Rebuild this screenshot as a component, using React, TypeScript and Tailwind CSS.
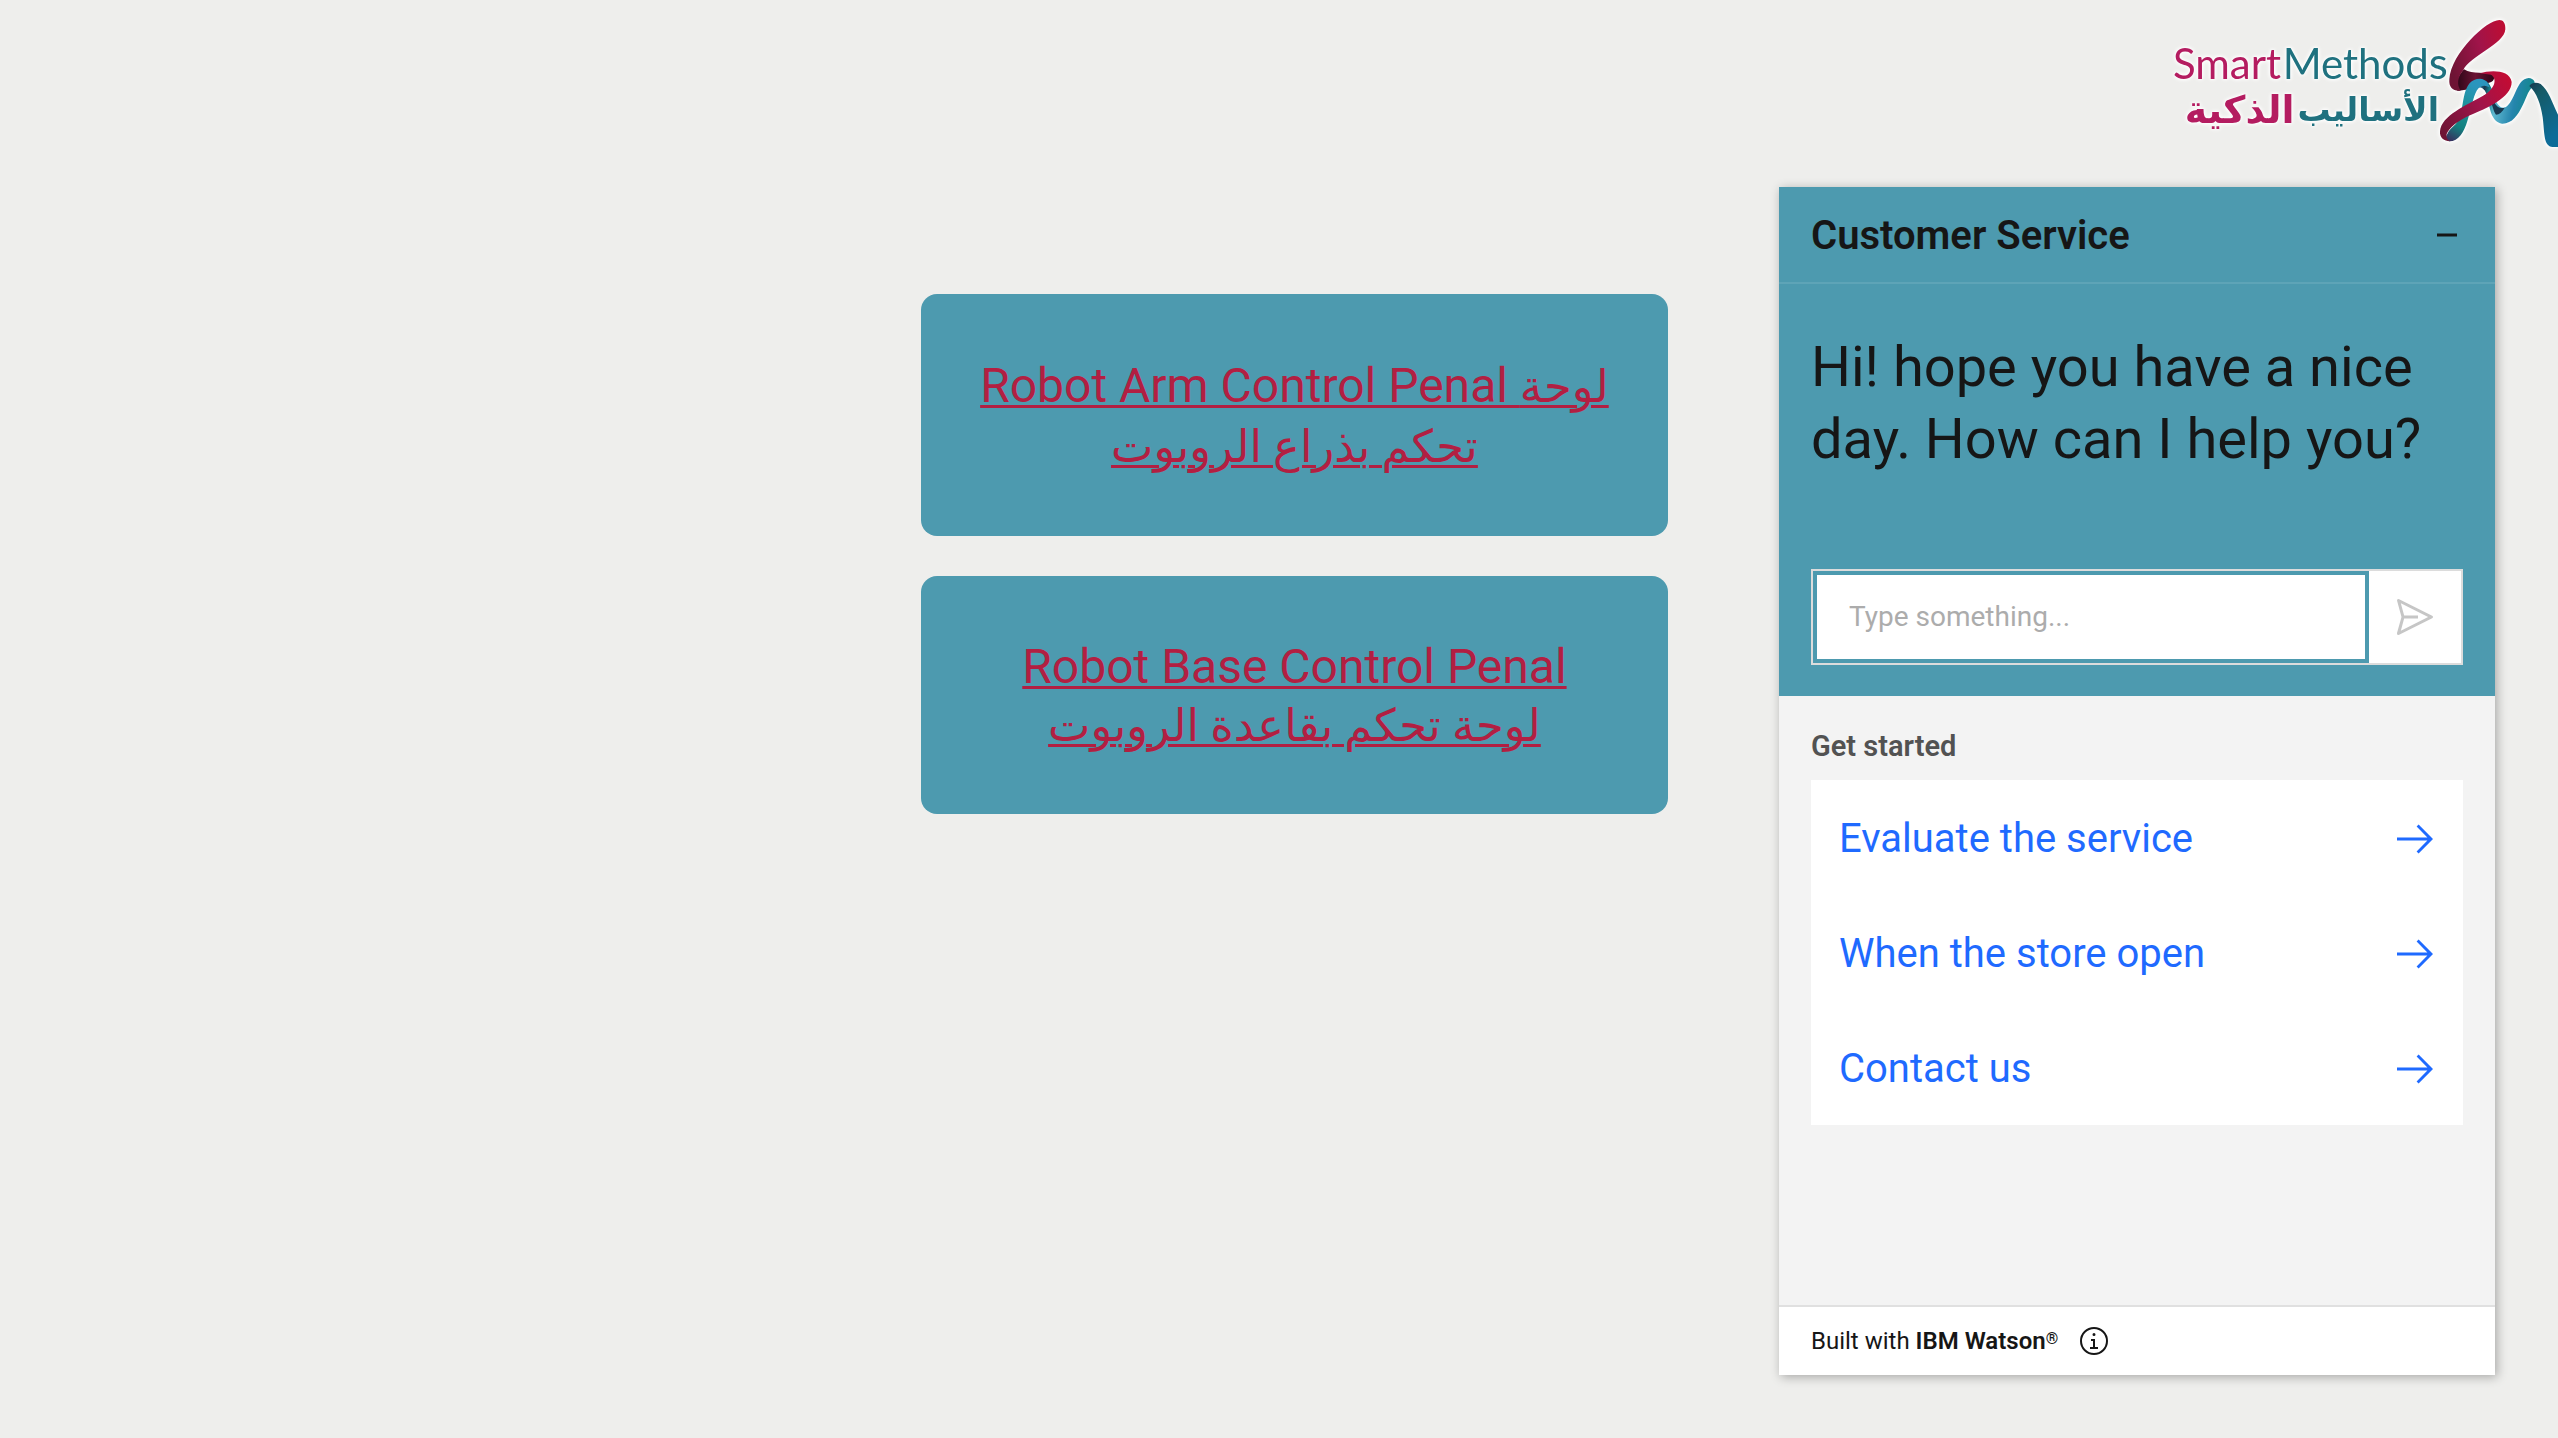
import type { ReactNode } from "react";

const starters = ["Evaluate the service", "When the store open", "Contact us"];

function Logo() {
  return (
    <svg
      viewBox="0 0 1224 510"
      className="h-[170px] w-[408px] [filter:drop-shadow(0_0_2px_white)_drop-shadow(0_0_1px_white)]"
      role="img"
      aria-label="Smart Methods"
    >
      <defs>
        <linearGradient id="armTop" x1="0" y1="0.6" x2="1" y2="0.2">
          <stop offset="0" stopColor="#6e1434" />
          <stop offset="0.55" stopColor="#a0144a" />
          <stop offset="1" stopColor="#bd0d33" />
        </linearGradient>
        <linearGradient id="armLow" x1="0" y1="0.8" x2="1" y2="0.2">
          <stop offset="0" stopColor="#6e1434" />
          <stop offset="0.55" stopColor="#a0144a" />
          <stop offset="1" stopColor="#c20c34" />
        </linearGradient>
        <linearGradient id="fold" x1="0" y1="0" x2="1" y2="0">
          <stop offset="0" stopColor="#2c0617" />
          <stop offset="0.5" stopColor="#6a1233" />
          <stop offset="1" stopColor="#2c0617" />
        </linearGradient>
        <linearGradient id="rise" x1="0" y1="1" x2="0.4" y2="0">
          <stop offset="0" stopColor="#3d2358" />
          <stop offset="0.3" stopColor="#14807f" />
          <stop offset="0.6" stopColor="#1b9296" />
          <stop offset="1" stopColor="#2b95bd" />
        </linearGradient>
        <linearGradient id="dip" x1="0" y1="0" x2="1" y2="0.15">
          <stop offset="0" stopColor="#2b95bd" />
          <stop offset="0.14" stopColor="#17384f" />
          <stop offset="0.22" stopColor="#157a85" />
          <stop offset="0.38" stopColor="#5fb9d0" />
          <stop offset="0.7" stopColor="#2585ad" />
          <stop offset="1" stopColor="#11888a" />
        </linearGradient>
        <linearGradient id="fall" x1="0" y1="0" x2="0.4" y2="1">
          <stop offset="0" stopColor="#17384f" />
          <stop offset="0.25" stopColor="#155a66" />
          <stop offset="1" stopColor="#0d6c98" />
        </linearGradient>
      </defs>
      <g fontFamily="Lato, sans-serif" fontSize="126">
        <text x="69" y="236" fill="#b41c60">Smart</text>
        <text x="398" y="236" fill="#1f717f">
          Method<tspan fontSize="132">s</tspan>
        </text>
      </g>
      <g fontFamily="DejaVu Sans, sans-serif" fontWeight="700" direction="rtl">
        <text x="867" y="362" fontSize="99" fill="#1f717f">الأساليب</text>
        <text x="434" y="370" fontSize="114" fill="#b41c60">الذكية</text>
      </g>
      <path fill="url(#fold)" d="M942 208C968 226 1008 212 1032 226C1036 246 1020 250 1000 250C972 254 955 274 922 272C914 250 925 225 942 208Z" />
      <path fill="url(#dip)" d="M985 237C1014 236 1024 258 1032 286C1038 310 1050 328 1066 322C1096 306 1098 236 1136 234C1152 236 1158 246 1152 260C1138 262 1130 290 1118 316C1104 346 1086 372 1056 371C1026 366 1020 330 1014 300C1010 276 1002 262 985 262Z" />
      <path fill="#17384f" d="M1028 296C1036 316 1046 328 1064 323C1058 334 1048 344 1038 344C1030 334 1028 316 1020 300Z" />
      <path fill="url(#rise)" d="M892 402C900 382 920 378 930 352C942 316 936 236 990 236C1006 238 1016 246 1018 262C1004 254 990 256 980 272C958 310 956 424 898 424C886 420 886 410 892 402Z" />
      <path fill="url(#armLow)" d="M990 220C1020 210 1080 208 1085 246C1086 292 1008 326 960 346C925 362 898 382 890 402C888 414 894 422 902 424C884 425 868 414 870 394C874 346 950 316 998 288C1036 266 1042 238 1024 224Z" />
      <path fill="url(#armTop)" d="M1048 60C1010 60 903 160 898 238C896 262 908 274 932 272C920 254 922 232 940 210C958 170 1064 132 1066 88C1067 70 1060 60 1048 60Z" />
      <path fill="url(#fall)" d="M1138 258C1146 246 1160 246 1172 252C1196 272 1206 306 1224 344V441H1208C1180 440 1184 398 1178 352C1172 312 1160 278 1138 258Z" />
    </svg>
  );
}

function ControlCard({ leading, children }: { leading: string; children: ReactNode }) {
  return (
    <div className="rounded-2xl bg-[#4d9aaf] px-6 pt-[62px] pb-[60px] text-center">
      <a
        href="#"
        className={`${leading} text-5xl text-[#b21f42] underline decoration-[3px] underline-offset-3 [font-family:Roboto,'DejaVu_Sans',sans-serif]`}
      >
        {children}
      </a>
    </div>
  );
}

function Arabic({ children }: { children: string }) {
  return (
    <span lang="ar" className="text-[45px] leading-none">
      {children}
    </span>
  );
}

export default function App() {
  return (
    <div className="flex min-h-screen flex-col bg-[#eeeeec] [font-family:Roboto,sans-serif]">
      <header className="flex h-[187px] shrink-0 justify-end">
        <Logo />
      </header>

      <main className="flex flex-1 gap-[111px] pr-[63px] pb-[63px] pl-[36%]">
        <nav className="flex flex-1 flex-col gap-10 pt-[107px]" aria-label="Control panels">
          <ControlCard leading="leading-[60px]">
            Robot Arm Control Penal <Arabic>لوحة</Arabic>
            <br />
            <Arabic>تحكم بذراع الروبوت</Arabic>
          </ControlCard>
          <ControlCard leading="leading-[58px]">
            Robot Base Control Penal
            <br />
            <Arabic>لوحة تحكم بقاعدة الروبوت</Arabic>
          </ControlCard>
        </nav>

        <section
          aria-label="Customer Service chat"
          className="flex w-[716px] shrink-0 flex-col bg-[#f3f3f3] text-[#161616] shadow-[2px_2px_10px_rgba(0,0,0,0.3)]"
        >
          <div className="flex h-[97px] items-center justify-between border-b-2 border-[#5ea4b7] bg-[#4d9aaf] pr-7 pl-8">
            <h2 className="pt-0.5 text-[40px] font-semibold">Customer Service</h2>
            <button type="button" aria-label="Minimize" className="flex size-10 items-center justify-center">
              <svg viewBox="0 0 40 40" className="size-10" fill="currentColor">
                <path d="M10 18.5h20v3H10z" />
              </svg>
            </button>
          </div>

          <div className="bg-[#4d9aaf] px-8 pt-[47px] pb-[31px]">
            <p className="mb-[94px] text-[56px] leading-[72px]">
              Hi! hope you have a nice
              <br />
              day. How can I help you?
            </p>
            <form className="flex h-24 border-2 border-[#dcdcdc] bg-white">
              <input
                type="text"
                aria-label="Message"
                placeholder="Type something..."
                className="min-w-0 flex-1 border-4 border-[#4d9aaf] bg-white px-8 text-[28px] outline-none placeholder:text-[#acacac]"
              />
              <button type="button" aria-label="Send" className="flex w-[92px] items-center justify-center text-[#c6c6c6]">
                <svg viewBox="0 0 32 32" className="size-12" fill="currentColor">
                  <path d="M27.45,15.11l-22-11a1,1,0,0,0-1.08.12,1,1,0,0,0-.33,1L7,16,4,26.74A1,1,0,0,0,5,28a1,1,0,0,0,.45-.11l22-11a1,1,0,0,0,0-1.78Zm-20.9,10L8.76,17H18V15H8.76L6.55,6.89,24.76,16Z" />
                </svg>
              </button>
            </form>
          </div>

          <div className="flex-1 px-8 pt-[30px]">
            <h3 className="mb-[14px] text-[29px] leading-10 font-semibold text-[#525252]">Get started</h3>
            <ul className="bg-white">
              {starters.map((label) => (
                <li key={label}>
                  <button
                    type="button"
                    className="flex h-[115px] w-full items-center justify-between pt-0.5 pr-7 pl-7 text-left text-[40px] text-[#1f6aff]"
                  >
                    {label}
                    <svg viewBox="0 0 20 20" className="size-10" fill="currentColor">
                      <path d="M11.8 2.8L10.8 3.8 16.2 9.3 1 9.3 1 10.7 16.2 10.7 10.8 16.2 11.8 17.2 19 10z" />
                    </svg>
                  </button>
                </li>
              ))}
            </ul>
          </div>

          <div className="flex h-[70px] items-center gap-5 border-t-2 border-[#e0e0e0] bg-white px-8 text-2xl">
            <p>
              Built with{" "}
              <span className="font-semibold">
                IBM Watson<span className="align-[5px] text-base leading-none">®</span>
              </span>
            </p>
            <button type="button" aria-label="About">
              <svg viewBox="0 0 32 32" className="size-8" fill="currentColor">
                <path d="M17 22V14H13v2h2v6H12v2h8V22zM16 8a1.5 1.5 0 101.5 1.5A1.5 1.5 0 0016 8z" />
                <path d="M16,30A14,14,0,1,1,30,16,14,14,0,0,1,16,30ZM16,4A12,12,0,1,0,28,16,12,12,0,0,0,16,4Z" />
              </svg>
            </button>
          </div>
        </section>
      </main>
    </div>
  );
}
